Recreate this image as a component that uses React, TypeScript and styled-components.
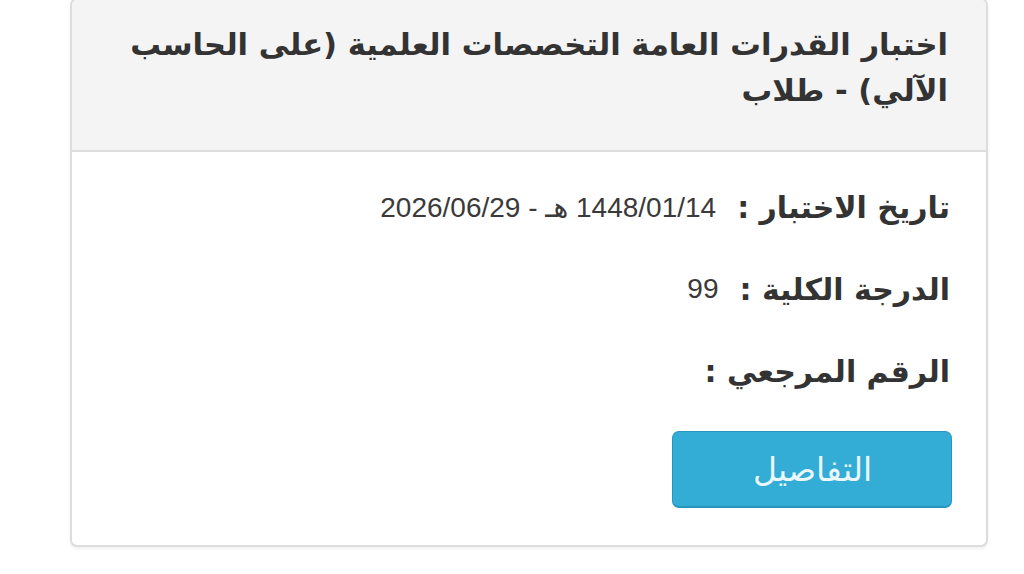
import React from "react";
import styled, { createGlobalStyle } from "styled-components";

const Global = createGlobalStyle`
  html, body {
    margin: 0;
    padding: 0;
    background: #ffffff;
  }
  body {
    font-family: "DejaVu Sans", "Liberation Sans", sans-serif;
    color: #333333;
  }
`;

const Page = styled.div`
  width: 1024px;
  height: 574px;
  overflow: hidden;
  direction: rtl;
  box-sizing: border-box;
  padding: 0 36px 0 70px;
`;

const Card = styled.section`
  margin-top: -2px;
  width: 918px;
  box-sizing: border-box;
  border: 2px solid #dddddd;
  border-radius: 7px;
  background: #ffffff;
  box-shadow: 0 2px 3px rgba(0, 0, 0, 0.06);
  overflow: hidden;
`;

const Header = styled.header`
  background: #f4f4f4;
  border-bottom: 2px solid #dddddd;
  padding: 22px 38px 36px 40px;
`;

const Title = styled.h1`
  margin: 0;
  font-family: "DejaVu Sans", sans-serif;
  font-weight: bold;
  font-size: 30.6px;
  line-height: 46px;
  color: #333333;
  text-align: right;
`;

const Body = styled.div`
  padding: 32px 36px 37px 40px;
  display: flex;
  flex-direction: column;
  align-items: flex-start;
`;

const Row = styled.div`
  display: flex;
  align-items: center;
  height: 46px;
  margin-bottom: 36px;
`;

const Label = styled.span`
  font-family: "DejaVu Sans", sans-serif;
  font-weight: bold;
  font-size: 30px;
  color: #333333;
  white-space: pre;
`;

const Value = styled.span`
  font-family: "Liberation Sans", "DejaVu Sans", sans-serif;
  font-size: 28px;
  color: #3a3a3a;
  margin-right: 21px;
  white-space: pre;
`;

const DetailsButton = styled.button`
  margin-top: 1px;
  margin-right: -2px;
  width: 280px;
  height: 77px;
  box-sizing: border-box;
  border: 1px solid #2696bf;
  border-bottom-width: 2px;
  border-radius: 7px;
  background: #33acd6;
  color: #eaf7fc;
  font-family: "DejaVu Sans", sans-serif;
  font-weight: 300;
  font-size: 33px;
  cursor: pointer;
`;

export default function App() {
  return (
    <>
      <Global />
      <Page>
        <Card>
          <Header>
            <Title>اختبار القدرات العامة التخصصات العلمية (على الحاسب الآلي) - طلاب</Title>
          </Header>
          <Body>
            <Row>
              <Label>تاريخ الاختبار :</Label>
              <Value>1448/01/14 هـ - 2026/06/29</Value>
            </Row>
            <Row>
              <Label>الدرجة الكلية :</Label>
              <Value>99</Value>
            </Row>
            <Row>
              <Label>الرقم المرجعي :</Label>
            </Row>
            <DetailsButton>التفاصيل</DetailsButton>
          </Body>
        </Card>
      </Page>
    </>
  );
}
